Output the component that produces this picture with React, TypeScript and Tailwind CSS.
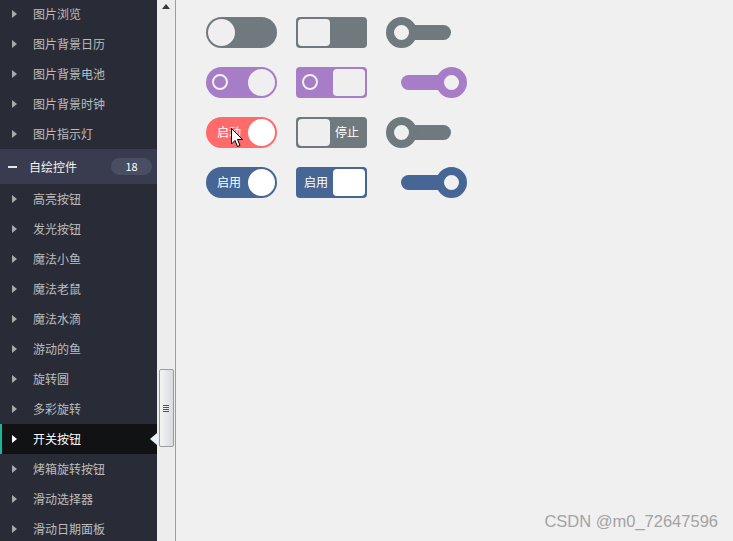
import React from "react";

type Tone = "gray" | "purple" | "red" | "blue";

const BG: Record<Tone, string> = {
  gray: "bg-[#6f797e]",
  purple: "bg-[#a67dc6]",
  red: "bg-[#ff6b6b]",
  blue: "bg-[#466795]",
};

const BORDER: Record<Tone, string> = {
  gray: "border-[#6f797e]",
  purple: "border-[#a67dc6]",
  red: "border-[#ff6b6b]",
  blue: "border-[#466795]",
};

const before = ["图片浏览", "图片背景日历", "图片背景电池", "图片背景时钟", "图片指示灯"];
const after = [
  "高亮按钮",
  "发光按钮",
  "魔法小鱼",
  "魔法老鼠",
  "魔法水滴",
  "游动的鱼",
  "旋转圆",
  "多彩旋转",
  "开关按钮",
  "烤箱旋转按钮",
  "滑动选择器",
  "滑动日期面板",
];

const Arrow = ({ white }: { white?: boolean }) => (
  <svg width="5" height="8" viewBox="0 0 5 8" className="shrink-0">
    <path d="M0 0 L5 4 L0 8 Z" fill={white ? "#ffffff" : "#a9a9a9"} />
  </svg>
);

const NavItem = ({ label, active }: { label: string; active?: boolean }) => (
  <div
    className={`relative flex h-[30px] items-center pl-[12px] ${
      active ? "bg-[#111214] text-white" : "text-[#bdbdbd]"
    }`}
  >
    {active && <div className="absolute left-0 top-0 h-full w-[2px] bg-[#16b89a]" />}
    <Arrow white={active} />
    <span className="ml-[16px] text-[12px]">{label}</span>
    {active && (
      <svg width="7" height="12" viewBox="0 0 7 12" className="absolute right-0 top-[9px]">
        <path d="M7 0 L0 6 L7 12 Z" fill="#e8f0fb" />
      </svg>
    )}
  </div>
);

const Sidebar = () => (
  <div className="w-[157px] shrink-0 overflow-hidden bg-[#292c37]">
    <div className="-mt-[1px]">
      {before.map((l) => (
        <NavItem key={l} label={l} />
      ))}
      <div className="flex h-[35px] items-center bg-[#393c4e] pl-[8px] pr-[5px] text-[#f2f2f2]">
        <div className="h-[2px] w-[9px] bg-[#e6e6e6]" />
        <span className="ml-[12px] flex-1 text-[12px]">自绘控件</span>
        <span className="flex h-[17px] w-[41px] items-center justify-center rounded-full bg-[#4a4e63] text-[11px] text-white">
          18
        </span>
      </div>
      {after.map((l) => (
        <NavItem key={l} label={l} active={l === "开关按钮"} />
      ))}
    </div>
  </div>
);

const Scrollbar = () => (
  <div className="relative flex w-[19px] shrink-0 flex-col items-center border-r border-[#9c9c9c] bg-[#ededed]">
    <svg width="8" height="5" viewBox="0 0 8 5" className="mt-[4px]">
      <path d="M0 5 L4 0 L8 5 Z" fill="#3a3a3a" />
    </svg>
    <div className="mt-[360px] flex h-[78px] w-[15px] flex-col items-center justify-center rounded-[2px] border border-[#9a9a9a] bg-gradient-to-r from-[#f4f4f4] to-[#d9dbe0]">
      <div className="flex flex-col gap-[1px]">
        <div className="h-[1px] w-[6px] bg-[#555]" />
        <div className="h-[1px] w-[6px] bg-[#555]" />
        <div className="h-[1px] w-[6px] bg-[#555]" />
        <div className="h-[1px] w-[6px] bg-[#555]" />
      </div>
    </div>
  </div>
);

const Ring = () => (
  <div className="h-[16px] w-[16px] rounded-full border-2 border-[#f0f0f0]" />
);

const RoundSwitch = ({ tone, on, text, ring }: { tone: Tone; on?: boolean; text?: string; ring?: boolean }) => (
  <div
    className={`relative flex h-[31px] w-[71px] items-center rounded-full ${BG[tone]} p-[2px] ${
      on ? "justify-end" : "justify-start"
    }`}
  >
    {ring && (
      <div className="absolute left-[6px] top-[7px]">
        <Ring />
      </div>
    )}
    {text && (
      <span className="absolute left-[11px] top-[6px] text-[12px] text-white">{text}</span>
    )}
    <div
      className={`h-[27px] w-[27px] rounded-full ${
        tone === "red" || tone === "blue" ? "bg-white" : "bg-[#efefef]"
      }`}
    />
  </div>
);

const SquareSwitch = ({ tone, on, text, ring }: { tone: Tone; on?: boolean; text?: string; ring?: boolean }) => (
  <div
    className={`relative flex h-[31px] w-[71px] items-center rounded-[4px] ${BG[tone]} p-[2px] ${
      on ? "justify-end" : "justify-start"
    }`}
  >
    {ring && (
      <div className="absolute left-[6px] top-[7px]">
        <Ring />
      </div>
    )}
    {text && (
      <span
        className={`absolute top-[6px] text-[12px] text-white ${on ? "left-[8px]" : "right-[8px]"}`}
      >
        {text}
      </span>
    )}
    <div
      className={`h-[27px] w-[32px] rounded-[4px] ${tone === "blue" ? "bg-white" : "bg-[#efefef]"}`}
    />
  </div>
);

const KnobSwitch = ({ tone, on }: { tone: Tone; on?: boolean }) => (
  <div className="relative h-[31px] w-[81px]">
    <div className={`absolute left-[15px] top-[8px] h-[15px] w-[50px] rounded-full ${BG[tone]}`} />
    <div
      className={`absolute top-0 h-[31px] w-[31px] rounded-full border-[8px] ${BORDER[tone]} bg-[#f0f0f0] ${
        on ? "left-[50px]" : "left-0"
      }`}
    />
  </div>
);

const Cursor = () => (
  <svg
    width="13"
    height="20"
    viewBox="0 0 13 20"
    className="pointer-events-none absolute left-[25px] top-[11px]"
  >
    <path
      d="M0.5 0.5 L0.5 16 L4 12.5 L6.5 18.5 L9 17.5 L6.5 11.5 L11.5 11.5 Z"
      fill="#ffffff"
      stroke="#000000"
      strokeWidth="1"
      strokeLinejoin="round"
    />
  </svg>
);

export default function App() {
  return (
    <div
      className="relative flex h-[541px] w-[733px] overflow-hidden bg-[#f0f0f0]"
      style={{ fontFamily: '"Noto Sans CJK SC", "Noto Sans", sans-serif' }}
    >
      <Sidebar />
      <Scrollbar />
      <div className="flex flex-1 flex-col gap-[19px] pl-[30px] pt-[17px]">
        <div className="flex items-center gap-[19px]">
          <RoundSwitch tone="gray" />
          <SquareSwitch tone="gray" />
          <KnobSwitch tone="gray" />
        </div>
        <div className="flex items-center gap-[19px]">
          <RoundSwitch tone="purple" on ring />
          <SquareSwitch tone="purple" on ring />
          <KnobSwitch tone="purple" on />
        </div>
        <div className="flex items-center gap-[19px]">
          <div className="relative">
            <RoundSwitch tone="red" on text="启动" />
            <Cursor />
          </div>
          <SquareSwitch tone="gray" text="停止" />
          <KnobSwitch tone="gray" />
        </div>
        <div className="flex items-center gap-[19px]">
          <RoundSwitch tone="blue" on text="启用" />
          <SquareSwitch tone="blue" on text="启用" />
          <KnobSwitch tone="blue" on />
        </div>
      </div>
      <div
        className="absolute bottom-[7px] right-[15px] text-[16.5px] text-[#a3a3a3]"
        style={{ fontFamily: '"Liberation Sans", Arial, sans-serif' }}
      >
        CSDN @m0_72647596
      </div>
    </div>
  );
}
